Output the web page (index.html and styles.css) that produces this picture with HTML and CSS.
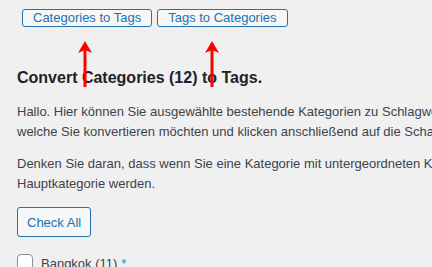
FILE: index.html
```html
<!DOCTYPE html>
<html lang="de">
<head>
  <meta charset="UTF-8" />
  <title>Categories to Tags Converter</title>
  <link rel="stylesheet" href="styles.css">
</head>
<body>

  <div class="wrap">
    <!-- Tab buttons -->
    <div class="tabs">
      <a href="#cat2tag" class="tab-btn">Categories to Tags</a>
      <a href="#tag2cat" class="tab-btn">Tags to Categories</a>
    </div>

    <h2 class="title">Convert Categories (12) to Tags.</h2>

    <p>Hallo. Hier können Sie ausgewählte bestehende Kategorien zu Schlagwörter umwandeln. Wählen Sie die Kategorien aus,<br>
      welche Sie konvertieren möchten und klicken anschließend auf die Schaltfläche.</p>

    <p>Denken Sie daran, dass wenn Sie eine Kategorie mit untergeordneten Kategorien konvertieren, diese zur<br>
      Hauptkategorie werden.</p>

    <button class="check-all">Check All</button>

    <ul class="cat-list">
      <li><label><input type="checkbox" class="cat-box"> Bangkok (11) <span class="star">*</span></label></li>
    </ul>

    <!-- Red annotation arrows -->
    <svg class="arrow arrow-one" width="16" height="46" viewBox="0 0 16 46">
      <path d="M8 0 L15 12 L8 9 L1 12 Z" fill="#ff0000"/>
      <rect x="6.5" y="8" width="3" height="38" fill="#ff0000"/>
    </svg>
    <svg class="arrow arrow-two" width="16" height="46" viewBox="0 0 16 46">
      <path d="M8 0 L15 12 L8 9 L1 12 Z" fill="#ff0000"/>
      <rect x="6.5" y="8" width="3" height="38" fill="#ff0000"/>
    </svg>
  </div>

</body>
</html>
```

FILE: styles.css
```css
/* Global */
body {
  margin: 0;
  background-color: #f0f0f1;
  color: #3c434a;
  font-family: "Liberation Sans", Arial, sans-serif;
  font-size: 13px;
  line-height: 20px;
  overflow: hidden;
}
.wrap {
  position: relative;
  padding: 9px 0 0 17px;
  white-space: nowrap;
}
/* Tabs */
.tabs {
  display: flex;
  gap: 5px;
  margin-left: 5px;
}
.tab-btn {
  display: block;
  height: 16px;
  line-height: 15px;
  padding: 0 10px;
  border: 1px solid #2271b1;
  border-radius: 3px;
  background: #f6f7f7;
  color: #2271b1;
  text-decoration: none;
}
/* Heading */
.title {
  margin: 39px 0 12px;
  font-size: 16px;
  line-height: 24px;
  font-weight: 600;
  color: #1d2327;
}
p {
  margin: 0 0 12px;
}
/* Check All button */
.check-all {
  display: block;
  height: 30px;
  margin-top: 13px;
  padding: 0 9px;
  border: 1px solid #2271b1;
  border-radius: 3px;
  background: #f6f7f7;
  color: #2271b1;
  font-family: inherit;
  font-size: 13px;
}
/* Category list */
.cat-list {
  list-style: none;
  margin: 17px 0 0;
  padding: 0;
}
.cat-list label {
  display: flex;
  align-items: flex-start;
  gap: 8px;
}
.cat-box {
  appearance: none;
  width: 16px;
  height: 16px;
  margin: 0;
  border: 1px solid #8c8f94;
  border-radius: 4px;
  background: #fff;
}
.star {
  color: #3582c4;
  margin-left: -4px;
}
/* Annotation arrows */
.arrow {
  position: absolute;
  top: 41px;
}
.arrow-one {
  left: 77px;
}
.arrow-two {
  left: 204px;
}
```
